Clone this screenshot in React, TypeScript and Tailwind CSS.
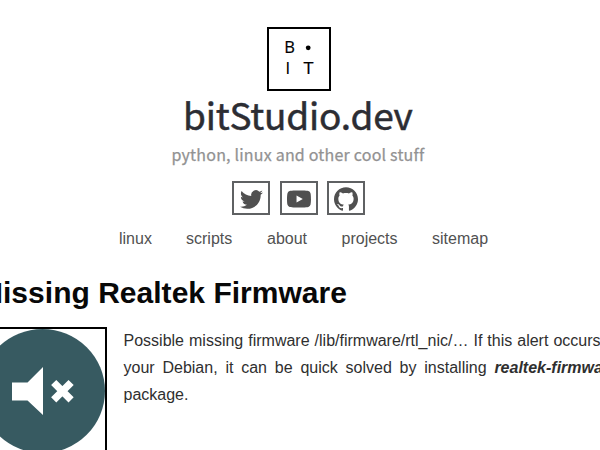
import React from "react";

const links = [
  { label: "linux", width: "w-[67px]" },
  { label: "scripts", width: "w-[81px]" },
  { label: "about", width: "w-[74.5px]" },
  { label: "projects", width: "w-[90.5px]" },
  { label: "sitemap", width: "w-[60px]" },
];

const socials = [
  {
    name: "Twitter",
    gap: "mr-[10px]",
    size: "size-[23px]",
    path: "M23.954 4.569a10 10 0 0 1-2.825.775 4.958 4.958 0 0 0 2.163-2.723c-.951.555-2.005.959-3.127 1.184a4.92 4.92 0 0 0-8.384 4.482C7.691 8.094 4.066 6.13 1.64 3.161a4.822 4.822 0 0 0-.666 2.475c0 1.71.87 3.213 2.188 4.096a4.904 4.904 0 0 1-2.228-.616v.061a4.923 4.923 0 0 0 3.946 4.827 4.996 4.996 0 0 1-2.212.085 4.937 4.937 0 0 0 4.604 3.417 9.868 9.868 0 0 1-6.102 2.105c-.39 0-.779-.023-1.17-.067a13.995 13.995 0 0 0 7.557 2.209c9.054 0 13.999-7.496 13.999-13.986 0-.209 0-.42-.015-.63a9.936 9.936 0 0 0 2.46-2.548z",
  },
  {
    name: "YouTube",
    gap: "mr-[9px]",
    size: "size-6",
    path: "M23.498 6.186a3.016 3.016 0 0 0-2.122-2.136C19.505 3.545 12 3.545 12 3.545s-7.505 0-9.377.505A3.017 3.017 0 0 0 .502 6.186C0 8.07 0 12 0 12s0 3.93.502 5.814a3.016 3.016 0 0 0 2.122 2.136c1.871.505 9.376.505 9.376.505s7.505 0 9.377-.505a3.015 3.015 0 0 0 2.122-2.136C24 15.93 24 12 24 12s0-3.93-.502-5.814zM9.545 15.568V8.432L15.818 12l-6.273 3.568z",
  },
  {
    name: "GitHub",
    gap: "",
    size: "size-6",
    path: "M12 .297c-6.63 0-12 5.373-12 12 0 5.303 3.438 9.8 8.205 11.385.6.113.82-.258.82-.577 0-.285-.01-1.04-.015-2.04-3.338.724-4.042-1.61-4.042-1.61C4.422 18.07 3.633 17.7 3.633 17.7c-1.087-.744.084-.729.084-.729 1.205.084 1.838 1.236 1.838 1.236 1.07 1.835 2.809 1.305 3.495.998.108-.776.417-1.305.76-1.605-2.665-.3-5.466-1.332-5.466-5.93 0-1.31.465-2.38 1.235-3.22-.135-.303-.54-1.523.105-3.176 0 0 1.005-.322 3.3 1.23.96-.267 1.98-.399 3-.405 1.02.006 2.04.138 3 .405 2.28-1.552 3.285-1.23 3.285-1.23.645 1.653.24 2.873.12 3.176.765.84 1.23 1.91 1.23 3.22 0 4.61-2.805 5.625-5.475 5.92.42.36.81 1.096.81 2.22 0 1.606-.015 2.896-.015 3.286 0 .315.21.69.825.57C20.565 22.092 24 17.592 24 12.297c0-6.627-5.373-12-12-12",
  },
];

function Logo() {
  return (
    <svg className="ml-[267px] block h-16 w-16" viewBox="0 0 64 64" fill="#000">
      <rect x="1" y="1" width="62" height="62" fill="#fff" stroke="#000" strokeWidth="2" />
      <g fontFamily="'Open Sans', sans-serif" fontSize="16.5">
        <text x="17.3" y="25.6" stroke="#000" strokeWidth="0.2">B</text>
        <text x="18.4" y="47" fontFamily="'Liberation Sans', sans-serif">I</text>
        <text x="36.4" y="47" textLength="10" lengthAdjust="spacingAndGlyphs" stroke="#000" strokeWidth="0.2">T</text>
      </g>
      <circle cx="41.2" cy="20.8" r="2.4" />
    </svg>
  );
}

function MutedSpeaker() {
  return (
    <svg className="block h-[124px] w-[125px]" viewBox="0 0 125 124">
      <ellipse cx="62.5" cy="62" rx="62.5" ry="62" fill="#375a61" />
      <path d="M32 53.5h15.5L63 38v48L47.5 71.5H32z" fill="#fff" />
      <path d="M73.7 53.5l17.4 17.4m0-17.4l-17.4 17.4" stroke="#fff" strokeWidth="7.3" />
    </svg>
  );
}

export default function App() {
  return (
    <div className="h-[450px] w-[600px] overflow-hidden bg-white font-['Liberation_Sans',Arial,sans-serif] text-base">
      <header className="pt-[27px]">
        <Logo />
        <h1 className="ml-[183px] h-[50px] whitespace-nowrap font-['Noto_Sans_CJK_SC',sans-serif] text-[37px] leading-[46px] tracking-[-0.2px] text-[#2c2d33] [-webkit-text-stroke:0.5px_#2c2d33]">
          bitStudio.dev
        </h1>
        <p className="ml-[171.5px] h-[40px] whitespace-nowrap font-['Noto_Sans_CJK_SC',sans-serif] text-[16px] leading-[26px] tracking-[0.2px] text-[#929292] [-webkit-text-stroke:0.25px_#929292]">
          python, linux and other cool stuff
        </p>
        <div className="flex pl-[232px]">
          {socials.map((s) => (
            <a key={s.name} aria-label={s.name} className={`flex h-[34px] w-[38px] items-center justify-center border-2 border-[#5f6163] pt-[2px] ${s.gap}`}>
              <svg className={`fill-[#505050] ${s.size}`} viewBox="0 0 24 24">
                <path d={s.path} />
              </svg>
            </a>
          ))}
        </div>
        <nav className="flex pl-[119px] pt-[11px] leading-[25px] text-[#515151]">
          {links.map((l) => (
            <a key={l.label} className={`shrink-0 ${l.width}`}>{l.label}</a>
          ))}
        </nav>
      </header>
      <article className="-ml-[22px] w-[640px]">
        <h2 className="pt-[23px] text-[30px] font-bold leading-[38px] tracking-[0.02px] text-[#080808]">Missing Realtek Firmware</h2>
        <div className="mt-[15px] flex items-start">
          <div className="mr-[16.5px] h-[130px] w-[129px] shrink-0 border-2 border-black">
            <MutedSpeaker />
          </div>
          <p className="grow text-justify leading-[27px] text-[#2f2f2f]">
            Possible missing firmware /lib/firmware/rtl_nic/… If this alert occurs in your Debian, it can be quick solved by installing{" "}
            <strong><em>realtek-firmware</em></strong> package.
          </p>
        </div>
      </article>
    </div>
  );
}
